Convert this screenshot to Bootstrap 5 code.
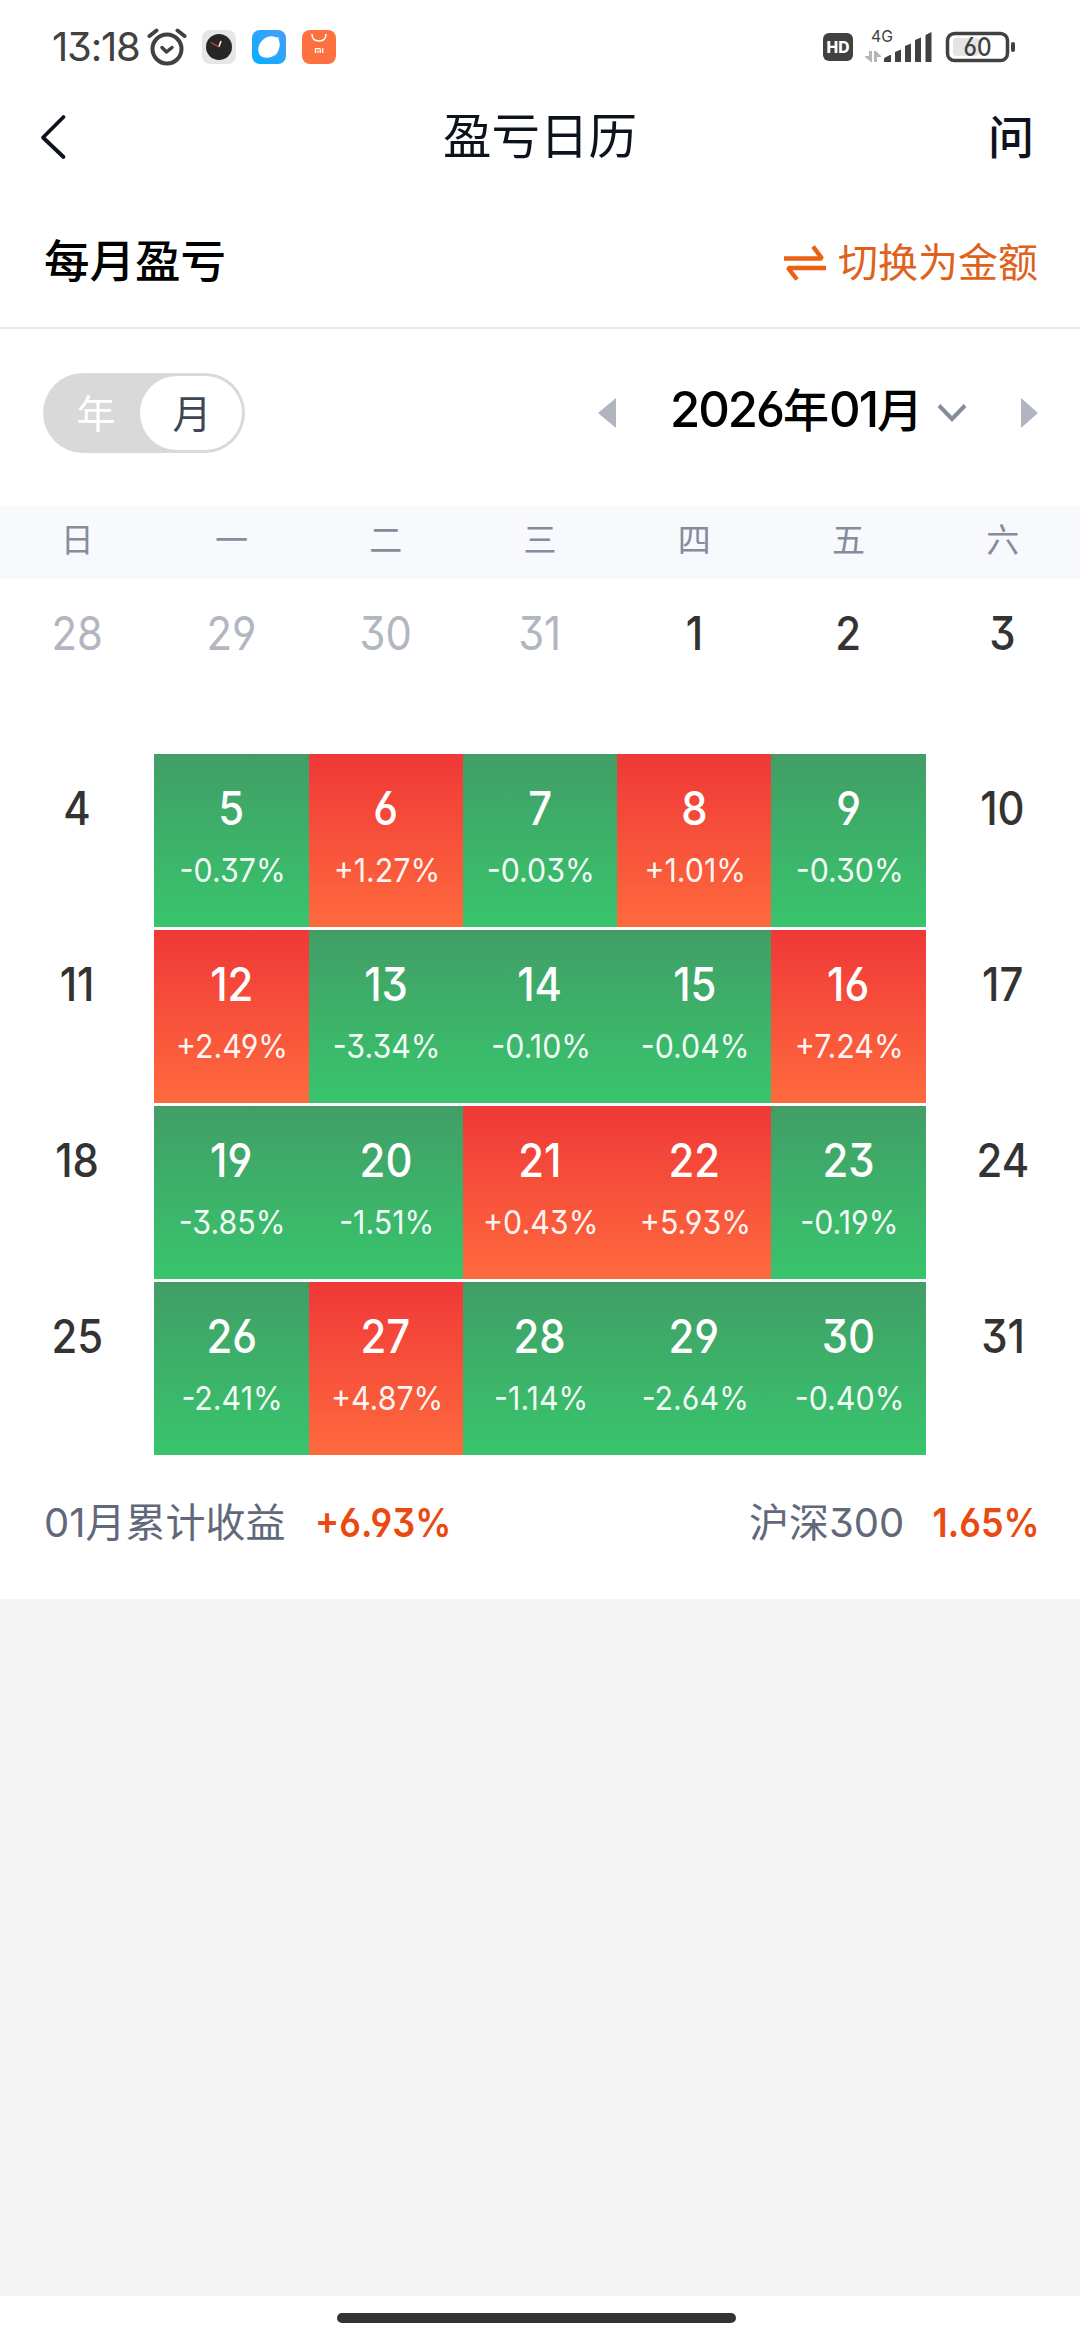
<!DOCTYPE html>
<html lang="zh-CN">
<head>
<meta charset="utf-8">
<meta name="viewport" content="width=device-width, initial-scale=1">
<title>盈亏日历</title>
<link href="https://cdn.jsdelivr.net/npm/bootstrap@5.3.0/dist/css/bootstrap.min.css" rel="stylesheet">
<style>
  body { font-family: Inter, "Noto Sans CJK SC", sans-serif; font-feature-settings: "cv03", "cv04", "cv09"; line-height: 1; color: #000; }
  .app { height: 2340px; overflow: hidden; }
  svg { display: block; flex: none; }
  .squeeze { display: inline-block; transform: scaleX(.91); }
  .from-left { transform-origin: left center; }
  .from-right { transform-origin: right center; }

  .statusbar { height: 94px; padding: 0 65px 0 52px; color: #414141; }
  .clock-text { font-size: 40px; width: 95px; letter-spacing: -1.2px; }
  .app-icons { gap: 16px; margin-left: 15px; }
  .titlebar { height: 86px; padding: 0 46px 0 40px; color: #0d131d; }
  .titlebar h1 { font-size: 48.5px; line-height: 1; padding-top: 1px; }
  .ask { font-size: 46px; font-weight: 500; }
  .back { width: 86px; }
  .side { width: 80px; }

  .section-head { height: 149px; padding: 15px 42px 0 44px; border-bottom: 2px solid #e9e9ec; }
  .section-head h2 { font-size: 45.5px; font-weight: 500; line-height: 1; padding-top: 2px; }
  .switcher { font-size: 40px; color: #e0611c; gap: 12px; padding-top: 3px; }

  .month-row { height: 177px; padding: 0 42px 9px 43px; }
  .toggle { width: 202px; height: 80px; border-radius: 40px; background: #d9d9d9; padding: 3px; font-size: 39px; }
  .toggle-year { width: 94px; color: #fff; padding-left: 6px; }
  .toggle-month { width: 102px; height: 74px; border-radius: 37px; background: #fff; color: #3f4654; padding-left: 2px; }
  .month-text { font-size: 49px; font-weight: 500; padding-bottom: 8px; margin-left: 54px; width: 267px; white-space: nowrap; letter-spacing: -2px; }
  .month-text .han { font-size: 46px; letter-spacing: 0; }
  .next { margin-left: 53px; }

  .week-head { height: 73px; padding-bottom: 5px; background: #f7f9fc; color: #868c9b; font-size: 33px; }
  .week-head > div, .day { width: 14.2857%; text-align: center; }
  .week { height: 176px; }
  .week:first-child { height: 175px; }
  .day { height: 173px; padding-top: 29px; color: #333; }
  .day-num { font-size: 46px; line-height: 51px; font-weight: 550; }
  .outside .day-num { font-weight: 400; color: #b1b6c0; }
  .day-pct { font-size: 33px; line-height: 40px; margin-top: 16px; padding-left: 2px; white-space: nowrap; }
  .day-pct .squeeze { transform: scaleX(.92); }
  .gain, .loss { color: #fff; }
  .gain { background: linear-gradient(#ef3838, #ff6a3d); }
  .loss { background: linear-gradient(#419e66, #38c56d); }
  .gain .day-pct, .loss .day-pct { color: rgba(255,255,255,.96); }

  .summary { height: 141px; padding: 0 40px 11px 44px; font-size: 40px; color: #61687a; }
  .rate { font-size: 39.5px; font-weight: 600; color: #e84a12; padding-top: 1px; }
  .gap-wide { margin-left: 29px; }
  .gap-narrow { margin-left: 18px; }
  .rest { background: #f4f4f4; height: 697px; }
  .homebar { height: 44px; }
  .homebar div { width: 399px; height: 10px; border-radius: 5px; background: #333; margin-right: 7px; }
</style>
</head>
<body>
<div class="app bg-white d-flex flex-column">

  <div class="statusbar d-flex align-items-center">
    <div class="clock-text">13:18</div>
    <svg width="40" height="38" viewBox="0 0 40 38" fill="none" stroke="#414141" stroke-width="4" stroke-linecap="round" stroke-linejoin="round">
      <circle cx="20" cy="21" r="14.5"/><path d="M2.5 8 9.5 2.500M37.500 8 30.500 2.500"/><path d="M15 19.500 19.500 24 25 19.500" stroke-width="3.500"/>
    </svg>
    <div class="app-icons d-flex">
      <svg width="34" height="34" viewBox="0 0 34 34">
        <rect width="34" height="34" rx="8" fill="#e6e6e6"/><circle cx="17" cy="17" r="13" fill="#262626"/>
        <path d="M17 17 9 12.500" stroke="#d8453c" stroke-width="1.200"/><path d="M17 16.500 19 11" stroke="#fff" stroke-width="1.500"/>
      </svg>
      <svg width="34" height="34" viewBox="0 0 34 34">
        <defs><linearGradient id="sky" x1="1" y1="0" x2="0" y2="1"><stop offset="0" stop-color="#4b9cf8"/><stop offset="1" stop-color="#03b0ff"/></linearGradient></defs>
        <rect width="34" height="34" rx="8" fill="url(#sky)"/>
        <path d="M18 7H27V16Q27 27 17 27H10L7 24V17Z" fill="#b5ddfc"/><ellipse cx="17" cy="17" rx="12" ry="9.500" transform="rotate(-45 17 17)" fill="#fff"/>
      </svg>
      <svg width="34" height="34" viewBox="0 0 34 34">
        <rect width="34" height="34" rx="8" fill="#fd7040"/><path d="M10 4Q10 11 17 11T24 4" fill="none" stroke="#fff" stroke-width="1.500"/>
        <path d="M13.500 23V18.700H17.300Q18.300 18.700 18.300 20V23M16 20.500V23M20.700 18V23" fill="none" stroke="#fff" stroke-width="1.300"/>
      </svg>
    </div>
    <svg class="ms-auto" width="192" height="40" viewBox="823 27 192 40" fill="#414141" font-family="Inter, sans-serif">
      <rect x="823" y="33" width="30" height="28" rx="6"/>
      <text x="838" y="52.500" font-size="15.500" font-weight="800" fill="#fff" text-anchor="middle" textLength="23" lengthAdjust="spacingAndGlyphs">HD</text>
      <text x="871" y="42" font-size="16.500" textLength="22" lengthAdjust="spacingAndGlyphs">4G</text>
      <path d="M869 51h3v11h-1l-6-5v-1h4zM874 62V51h2l5 5v1h-4v5z" fill="#b5b5b5"/>
      <path d="M884 59q0-1 1-1.500l5-2.500h1v7h-7zM895 52l6-2.500V62h-6zM905 46l6-2.500V62h-6zM915 40l6-2.500V62h-6zM925.500 35l6-3V62h-6z"/>
      <rect x="947.500" y="33.500" width="60" height="27" rx="7" fill="none" stroke="#414141" stroke-width="3.500"/>
      <rect x="953" y="38" width="26" height="18" rx="3" fill="#e4e4e4"/>
      <text x="977.500" y="56" font-size="25" font-weight="500" text-anchor="middle" textLength="28" lengthAdjust="spacingAndGlyphs">60</text>
      <rect x="1011" y="42" width="4" height="10" rx="2"/>
    </svg>
  </div>

  <header class="titlebar d-flex align-items-center justify-content-between">
    <div class="back"><svg width="28" height="46" viewBox="0 0 28 46" fill="none" stroke="#0d131d" stroke-width="3.800" stroke-linecap="round" stroke-linejoin="round"><path d="M23.500 3 3 23.500 23.500 43"/></svg></div>
    <h1 class="mb-0 fw-normal">盈亏日历</h1>
    <div class="side text-end ask">问</div>
  </header>

  <section class="section-head d-flex align-items-center justify-content-between">
    <h2 class="mb-0">每月盈亏</h2>
    <div class="switcher d-flex align-items-center">
      <svg width="42" height="38" viewBox="0 0 42 38" fill="none" stroke="#ec6014" stroke-width="4.400"><path d="M0 14.500H38L29 2.500M42 24H4L13 35.500" stroke-linejoin="bevel"/></svg>
      <span>切换为金额</span>
    </div>
  </section>

  <section class="month-row d-flex align-items-center justify-content-between">
    <div class="toggle d-flex align-items-center">
      <div class="toggle-year text-center">年</div>
      <div class="toggle-month d-flex align-items-center justify-content-center">月</div>
    </div>
    <div class="d-flex align-items-center">
      <svg width="18" height="30" viewBox="0 0 18 30" fill="#b0b5c0"><path d="M18 0V30L0 15z"/></svg>
      <div class="month-text">2026<span class="han">年</span>01<span class="han">月</span></div>
      <svg width="30" height="20" viewBox="0 0 30 20" fill="none" stroke="#868c9b" stroke-width="4"><path d="M2 2.500 15 16 28 2.500"/></svg>
      <svg class="next" width="18" height="30" viewBox="0 0 18 30" fill="#b0b5c0"><path d="M1 0V30L18 15z"/></svg>
    </div>
  </section>

  <div class="week-head d-flex align-items-center">
    <div>日</div><div>一</div><div>二</div><div>三</div><div>四</div><div>五</div><div>六</div>
  </div>
  <div id="weeks"></div>

  <section class="summary d-flex align-items-center justify-content-between">
    <div class="d-flex align-items-center"><span>01月累计收益</span><span class="rate gap-wide squeeze from-left">+6.93%</span></div>
    <div class="d-flex align-items-center"><span>沪深300</span><span class="rate gap-narrow squeeze from-right">1.65%</span></div>
  </section>

  <div class="rest"></div>
  <div class="homebar d-flex align-items-center justify-content-center"><div></div></div>
</div>

<script src="https://cdn.jsdelivr.net/npm/bootstrap@5.3.0/dist/js/bootstrap.bundle.min.js"></script>
<script>
  const daily = {
    5: '-0.37%', 6: '+1.27%', 7: '-0.03%', 8: '+1.01%', 9: '-0.30%',
    12: '+2.49%', 13: '-3.34%', 14: '-0.10%', 15: '-0.04%', 16: '+7.24%',
    19: '-3.85%', 20: '-1.51%', 21: '+0.43%', 22: '+5.93%', 23: '-0.19%',
    26: '-2.41%', 27: '+4.87%', 28: '-1.14%', 29: '-2.64%', 30: '-0.40%'
  };
  // January 2026 begins on a Thursday, so four December days lead the grid
  let html = '';
  for (let w = 0; w < 5; w++) {
    html += '<div class="week d-flex">';
    for (let d = 0; d < 7; d++) {
      const n = w * 7 + d - 3, outside = n < 1, pct = daily[n];
      const tone = outside ? 'outside' : !pct ? '' : pct[0] === '+' ? 'gain' : 'loss';
      html += `<div class="day ${tone}"><div class="day-num"><span class="squeeze">${outside ? n + 31 : n}</span></div>` +
        (pct ? `<div class="day-pct"><span class="squeeze">${pct}</span></div>` : '') + '</div>';
    }
    html += '</div>';
  }
  document.getElementById('weeks').innerHTML = html;
</script>
</body>
</html>
